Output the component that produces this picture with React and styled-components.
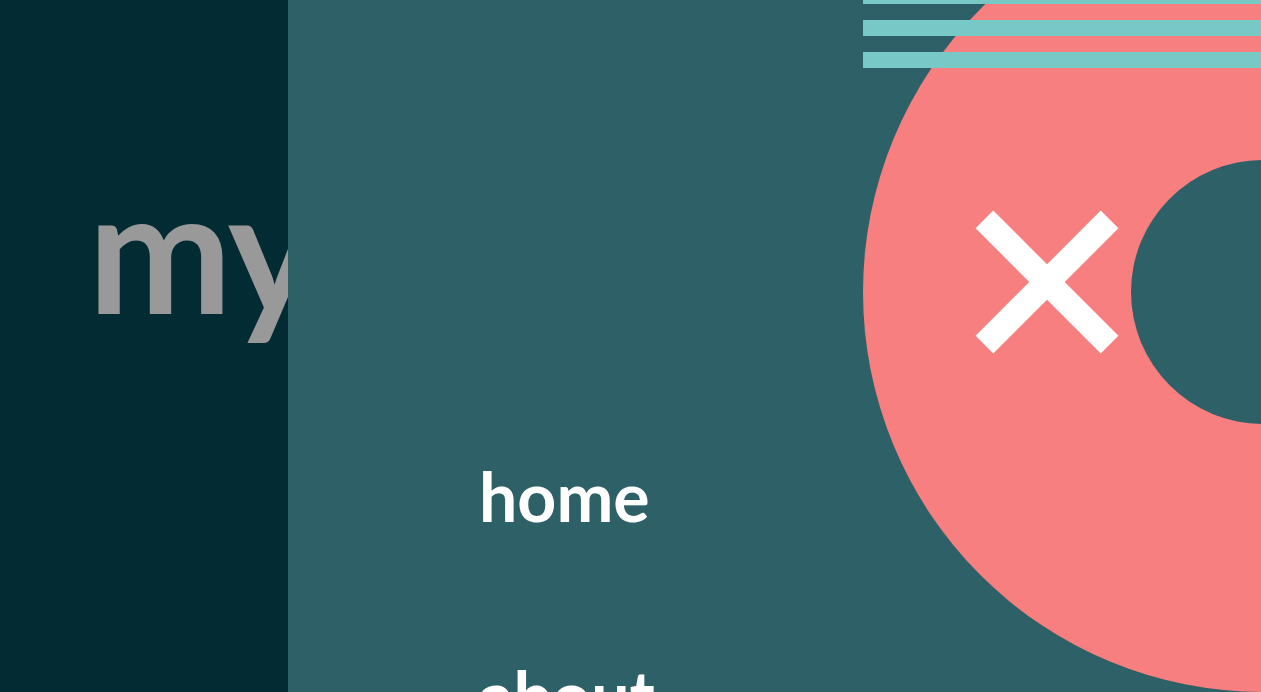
import React from 'react';
import styled, { createGlobalStyle } from 'styled-components';

const GlobalStyle = createGlobalStyle`
  html, body {
    margin: 0;
    padding: 0;
    height: 100%;
    overflow: hidden;
  }
  body {
    font-family: 'Lato', 'Noto Sans', sans-serif;
  }
`;

const Page = styled.div`
  display: flex;
  width: 100vw;
  height: 100vh;
  overflow: hidden;
`;

const Sidebar = styled.aside`
  flex: 0 0 288px;
  min-width: 0;
  background: #032b33;
  padding: 162px 0 0 88px;
  box-sizing: border-box;
`;

const Title = styled.h1`
  margin: 0;
  font-family: 'Lato', sans-serif;
  font-weight: 700;
  font-size: 172px;
  line-height: 1;
  letter-spacing: -2px;
  color: #999999;
  white-space: nowrap;
`;

const Main = styled.main`
  flex: 1;
  min-width: 0;
  position: relative;
  z-index: 1;
  background: #2e6067;
  overflow: hidden;
  padding: 462px 0 0 191px;
  box-sizing: border-box;
`;

const Nav = styled.ul`
  list-style: none;
  margin: 0;
  padding: 0;
  display: flex;
  flex-direction: column;
  gap: 131px;
`;

const NavItem = styled.li`
  font-family: 'Lato', sans-serif;
  font-weight: 700;
  font-size: 68px;
  line-height: 1;
  color: #ffffff;
`;

const Ring = styled.div`
  position: absolute;
  left: 575px;
  top: -108px;
  width: 800px;
  height: 800px;
  border-radius: 50%;
  background: #f77f7f;
  display: flex;
  align-items: center;
  justify-content: center;
`;

const Hole = styled.div`
  width: 264px;
  height: 264px;
  border-radius: 50%;
  background: #2e6067;
`;

const Stripes = styled.div`
  position: absolute;
  left: 575px;
  right: 0;
  top: -12px;
  height: 80px;
  background: repeating-linear-gradient(
    to bottom,
    #78c8c8 0,
    #78c8c8 16px,
    transparent 16px,
    transparent 32px
  );
`;

const CloseButton = styled.button`
  position: absolute;
  left: 667px;
  top: 190px;
  width: 184px;
  height: 184px;
  padding: 0;
  border: none;
  background: transparent;
  cursor: pointer;

  &::before,
  &::after {
    content: '';
    position: absolute;
    left: 50%;
    top: 50%;
    width: 177px;
    height: 25px;
    background: #ffffff;
    transform: translate(-50%, -50%) rotate(45deg);
  }
  &::after {
    transform: translate(-50%, -50%) rotate(-45deg);
  }
`;

const App = () => (
  <Page>
    <GlobalStyle />
    <Sidebar>
      <Title>my portfolio</Title>
    </Sidebar>
    <Main>
      <Ring><Hole /></Ring>
      <Stripes />
      <CloseButton aria-label="close menu" />
      <Nav>
        <NavItem>home</NavItem>
        <NavItem>about</NavItem>
        <NavItem>work</NavItem>
      </Nav>
    </Main>
  </Page>
);

export default App;
